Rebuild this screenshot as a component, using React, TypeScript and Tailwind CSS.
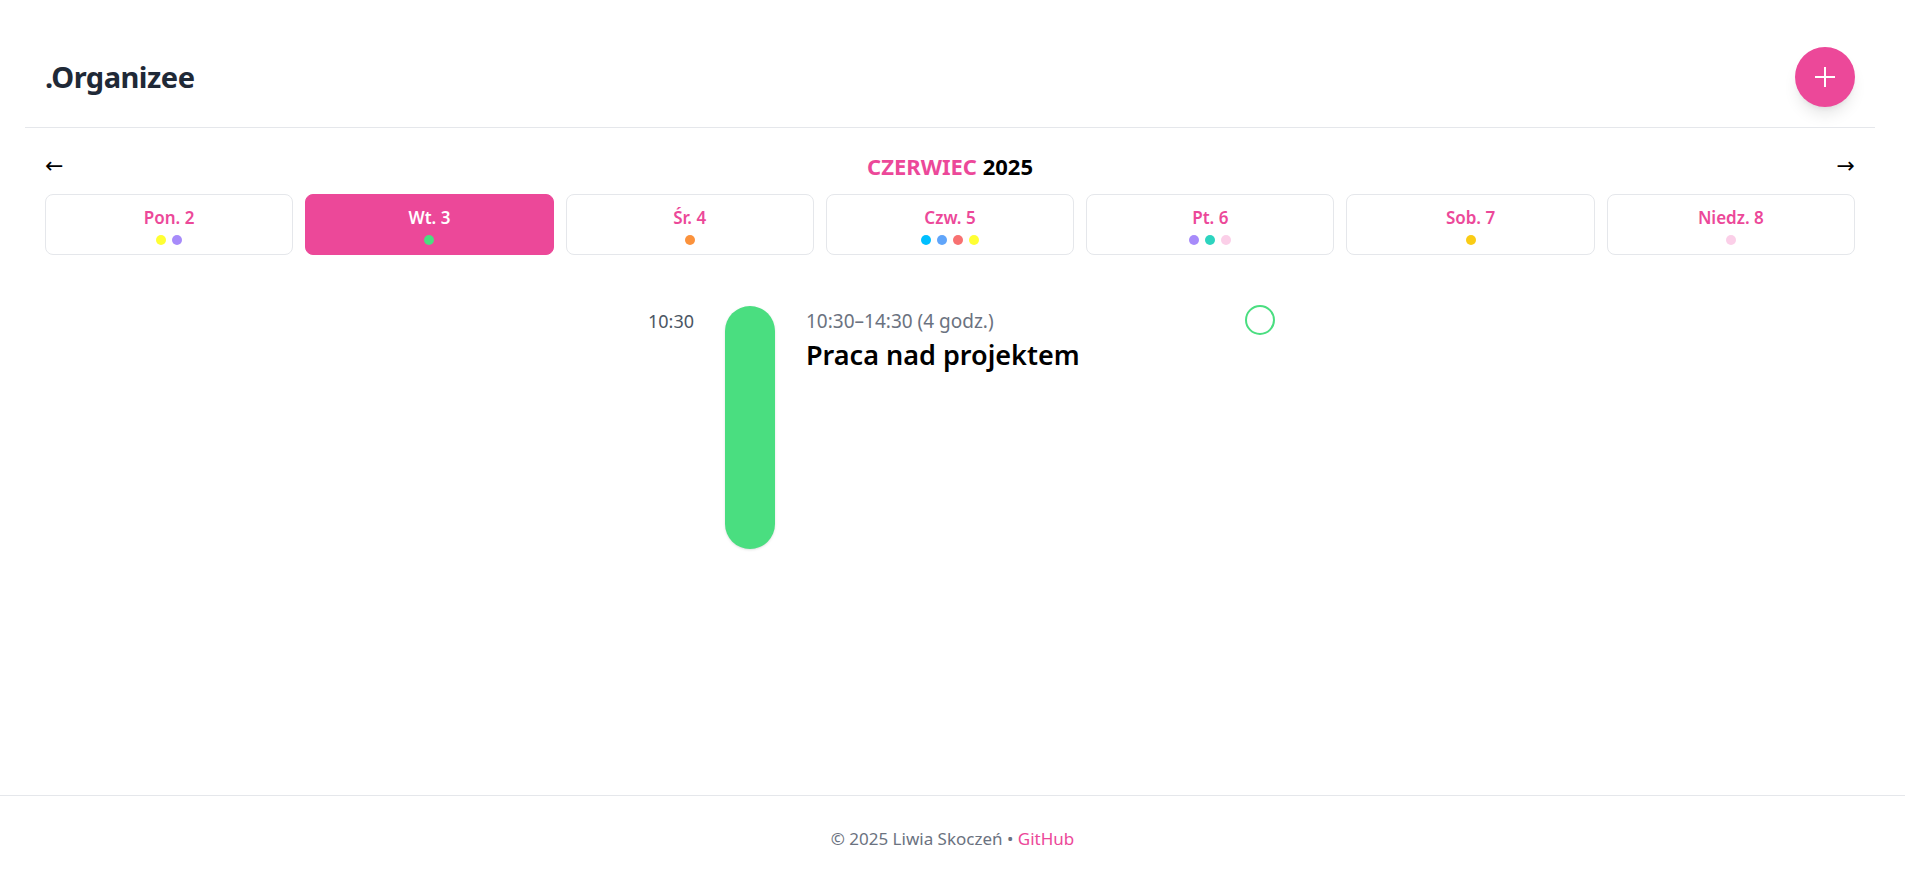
const days = [
  { label: "Pon. 2", dots: ["bg-[#ffff33]", "bg-[#a78bfa]"] },
  { label: "Wt. 3", dots: ["bg-[#4ade80]"], active: true },
  { label: "Śr. 4", dots: ["bg-[#fb923c]"] },
  { label: "Czw. 5", dots: ["bg-[#00bfff]", "bg-[#60a5fa]", "bg-[#f87171]", "bg-[#ffff33]"] },
  { label: "Pt. 6", dots: ["bg-[#a78bfa]", "bg-[#2dd4bf]", "bg-[#fbcfe8]"] },
  { label: "Sob. 7", dots: ["bg-[#facc15]"] },
  { label: "Niedz. 8", dots: ["bg-[#fbcfe8]"] },
];

const App = () => {
  return (
    <div className="min-h-screen flex flex-col bg-white font-['Noto_Sans',sans-serif]">
      <main className="flex-1">
        <div className="ml-[25px] mr-[30px] border-b border-[#e5e7eb]">
          <header className="flex items-center justify-between px-5 pt-[47px] pb-5">
            <h1 className="text-[29px] font-bold text-[#1f2937] tracking-[-0.5px]">.Organizee</h1>
            <button className="w-[60px] h-[60px] rounded-full bg-[#ec4899] shadow-lg flex items-center justify-center">
              <svg width="22" height="22" viewBox="0 0 22 22" fill="none" stroke="white" strokeWidth="2">
                <line x1="11" y1="1" x2="11" y2="21" />
                <line x1="1" y1="11" x2="21" y2="11" />
              </svg>
            </button>
          </header>
        </div>

        <section className="ml-[45px] mr-[50px] mt-6">
          <div className="flex items-center justify-between h-7">
            <button className="text-[22px] text-black leading-7 font-['DejaVu_Sans',sans-serif]">←</button>
            <div className="text-[22px] font-bold leading-7">
              <span className="text-[#ec4899]">CZERWIEC</span> <span className="text-black">2025</span>
            </div>
            <button className="text-[22px] text-black leading-7 font-['DejaVu_Sans',sans-serif]">→</button>
          </div>

          <div className="grid grid-cols-7 gap-3 mt-[14px]">
            {days.map((d) => (
              <div
                key={d.label}
                className={
                  d.active
                    ? "rounded-lg border border-[#ec4899] bg-[#ec4899] py-[9px] flex flex-col items-center"
                    : "rounded-lg border border-[#e5e7eb] bg-white py-[9px] flex flex-col items-center"
                }
              >
                <span className={d.active ? "text-[17px] font-semibold leading-7 text-white" : "text-[17px] font-semibold leading-7 text-[#ec4899]"}>
                  {d.label}
                </span>
                <div className="flex gap-1.5 mt-[3px]">
                  {d.dots.map((c, i) => (
                    <span key={i} className={"w-2.5 h-2.5 rounded-full " + c} />
                  ))}
                </div>
              </div>
            ))}
          </div>
        </section>

        <section className="w-[677px] pr-[5px] mx-auto mt-[51px] flex">
          <div className="w-20 text-right text-lg leading-7 text-[#4b5563] mt-[1px]">10:30</div>
          <div className="ml-[31px] w-[50px] h-[243px] rounded-full bg-[#4ade80] shadow-sm" />
          <div className="ml-[31px] flex-1 flex justify-between mr-[11px]">
            <div className="mt-[1px]">
              <div className="text-[19px] leading-7 text-[#6b7280]">10:30–14:30 (4 godz.)</div>
              <div className="text-[27px] font-semibold text-black leading-10">Praca nad projektem</div>
            </div>
            <div className="w-[30px] h-[30px] rounded-full border-2 border-[#4ade80] -mt-[1px]" />
          </div>
        </section>
      </main>

      <footer className="border-t border-[#e5e7eb] pt-[31px] pb-[29px] text-center text-[17px] leading-6 text-[#6b7280]">
        © 2025 Liwia Skoczeń • <a className="text-[#ec4899]">GitHub</a>
      </footer>
    </div>
  );
};

export default App;
